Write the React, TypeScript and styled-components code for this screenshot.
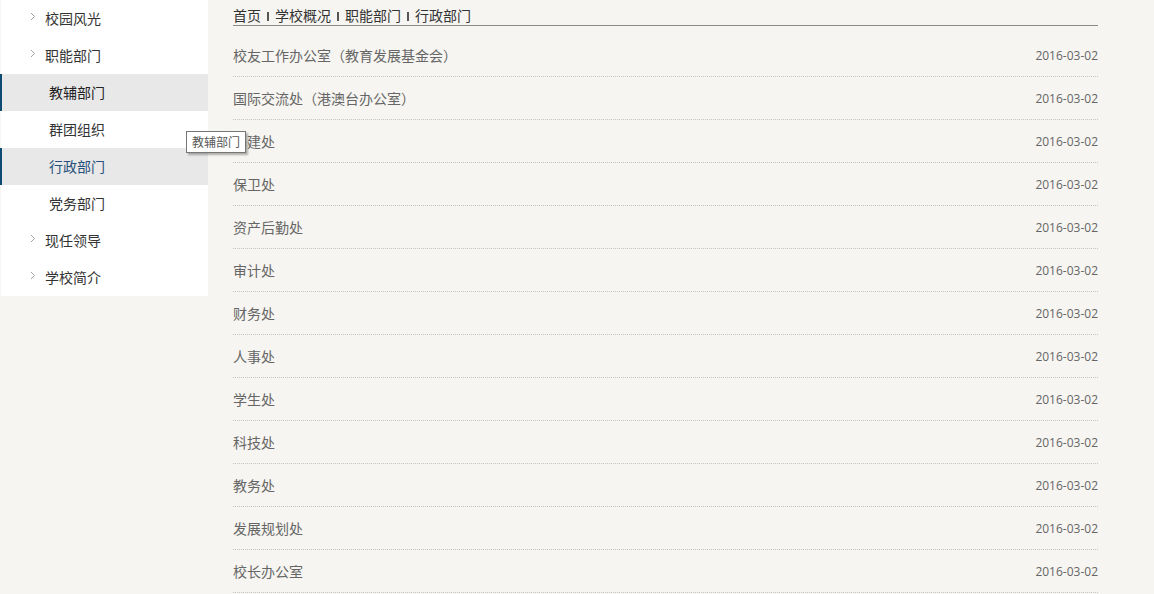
import React from 'react';
import styled, { createGlobalStyle } from 'styled-components';

const GlobalStyle = createGlobalStyle`
  html, body {
    margin: 0;
    padding: 0;
    background: #f6f5f1;
    font-family: "Noto Sans CJK SC", "Liberation Sans", sans-serif;
    text-spacing-trim: space-all;
    font-kerning: none;
  }
  * {
    box-sizing: border-box;
  }
`;

type MenuItem = { label: string; level: 1 | 2; active?: boolean; current?: boolean };

const menu: MenuItem[] = [
  { label: '校园风光', level: 1 },
  { label: '职能部门', level: 1 },
  { label: '教辅部门', level: 2, active: true },
  { label: '群团组织', level: 2 },
  { label: '行政部门', level: 2, active: true, current: true },
  { label: '党务部门', level: 2 },
  { label: '现任领导', level: 1 },
  { label: '学校简介', level: 1 },
];

const crumbs = ['首页', '学校概况', '职能部门', '行政部门'];

const news = [
  '校友工作办公室（教育发展基金会）',
  '国际交流处（港澳台办公室）',
  '基建处',
  '保卫处',
  '资产后勤处',
  '审计处',
  '财务处',
  '人事处',
  '学生处',
  '科技处',
  '教务处',
  '发展规划处',
  '校长办公室',
];

const Chevron = () => (
  <svg width="6" height="9" viewBox="0 0 6 9">
    <polyline points="1,1 4.5,4.5 1,8" fill="none" stroke="#a3a3a3" strokeWidth="1" />
  </svg>
);

const App: React.FC = () => {
  return (
    <>
      <GlobalStyle />
      <Page>
        <Sidebar>
          {menu.map((item, i) => (
            <MenuRow key={i} $level={item.level} $active={item.active} $current={item.current}>
              {item.level === 1 && (
                <Arrow>
                  <Chevron />
                </Arrow>
              )}
              <span>{item.label}</span>
              {/* 浏览器原生 title 提示 */}
              {i === 2 && <Tooltip>教辅部门</Tooltip>}
            </MenuRow>
          ))}
        </Sidebar>

        <Content>
          <Breadcrumb>
            {crumbs.map((c, i) => (
              <React.Fragment key={c}>
                {i > 0 && <Sep />}
                <span>{c}</span>
              </React.Fragment>
            ))}
          </Breadcrumb>
          <List>
            {news.map((title) => (
              <Row key={title}>
                <Title>{title}</Title>
                <DateText>2016-03-02</DateText>
              </Row>
            ))}
          </List>
        </Content>
      </Page>
    </>
  );
};

const Page = styled.div`
  display: flex;
  align-items: flex-start;
  width: 1154px;
`;

const Sidebar = styled.ul`
  list-style: none;
  margin: 0 0 0 1px;
  padding: 0;
  width: 207px;
  background: #fff;
`;

const MenuRow = styled.li<{ $level: 1 | 2; $active?: boolean; $current?: boolean }>`
  position: relative;
  display: flex;
  align-items: center;
  height: 37px;
  margin-left: ${({ $active }) => ($active ? '-1px' : '0')};
  padding-left: ${({ $level, $active }) => ($level === 1 ? 29 : $active ? 47 : 48)}px;
  border-left: ${({ $active }) => ($active ? '2px solid #0e4c73' : 'none')};
  background: ${({ $active }) => ($active ? '#e8e8e8' : '#fff')};
  color: ${({ $current, $active }) => ($current ? '#27507a' : $active ? '#222' : '#333')};
  font-size: 14px;
  line-height: 37px;
`;

const Arrow = styled.span`
  display: inline-flex;
  width: 15px;
  margin-top: -4px;
`;

const Tooltip = styled.div`
  position: absolute;
  left: 184px;
  top: 57px;
  z-index: 5;
  height: 22px;
  padding: 0 5px;
  background: #fff;
  border: 1px solid #767676;
  box-shadow: 2px 2px 2px rgba(0, 0, 0, 0.3);
  color: #575757;
  font-size: 12px;
  line-height: 20px;
  white-space: nowrap;
`;

const Content = styled.div`
  width: 865px;
  margin-left: 25px;
`;

const Breadcrumb = styled.div`
  display: flex;
  align-items: center;
  height: 26px;
  padding-top: 4px;
  border-bottom: 1px solid #8a8a8a;
  color: #333;
  font-size: 14px;
  line-height: 20px;
`;

const Sep = styled.i`
  display: inline-block;
  width: 2px;
  height: 9px;
  margin: 3px 6px 0;
  background: #555;
`;

const List = styled.ul`
  list-style: none;
  margin: 8px 0 0;
  padding: 0;
`;

const Row = styled.li`
  display: flex;
  justify-content: space-between;
  align-items: center;
  height: 43px;
  border-bottom: 1px dotted #c4c4c4;
`;

const Title = styled.span`
  color: #666;
  font-size: 14px;
  font-feature-settings: "halt" 0, "palt" 0, "kern" 0;
`;

const DateText = styled.span`
  color: #666;
  font-family: "Open Sans", "Liberation Sans", sans-serif;
  font-size: 12px;
`;

export default App;
